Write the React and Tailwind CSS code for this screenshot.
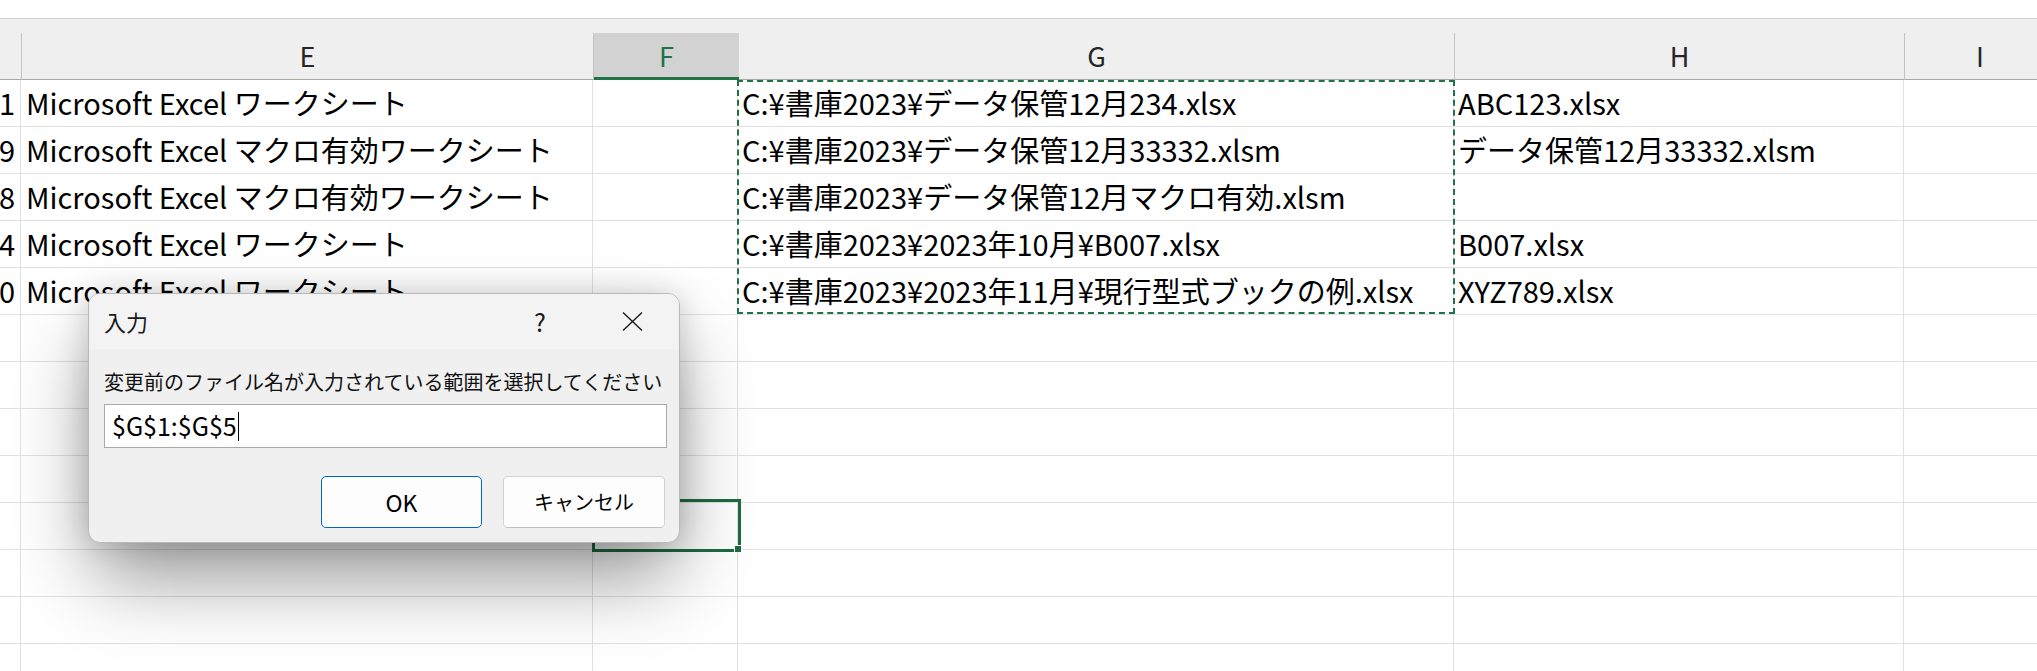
import React from "react";

const rows = [
  { d: "1", e: "Microsoft Excel ワークシート", g: "C:¥書庫2023¥データ保管12月234.xlsx", h: "ABC123.xlsx" },
  { d: "9", e: "Microsoft Excel マクロ有効ワークシート", g: "C:¥書庫2023¥データ保管12月33332.xlsm", h: "データ保管12月33332.xlsm" },
  { d: "8", e: "Microsoft Excel マクロ有効ワークシート", g: "C:¥書庫2023¥データ保管12月マクロ有効.xlsm", h: "" },
  { d: "4", e: "Microsoft Excel ワークシート", g: "C:¥書庫2023¥2023年10月¥B007.xlsx", h: "B007.xlsx" },
  { d: "0", e: "Microsoft Excel ワークシート", g: "C:¥書庫2023¥2023年11月¥現行型式ブックの例.xlsx", h: "XYZ789.xlsx" },
];

// pad out the empty rows below the data
const allRows = [...rows, ...Array.from({ length: 8 }, () => ({ d: "", e: "", g: "", h: "" }))];

function Row({ r }) {
  return (
    <div className="flex h-[47px] border-b border-[#e1e1e1]">
      <div className="w-[22px] shrink-0 border-r border-[#e1e1e1] flex items-center justify-end pr-[5px] -ml-[1px]">
        {r.d}
      </div>
      <div className="w-[572px] shrink-0 border-r border-[#e1e1e1] flex items-center pl-[5px] whitespace-nowrap">{r.e}</div>
      <div className="w-[145px] shrink-0 border-r border-[#e1e1e1]" />
      <div className="w-[716px] shrink-0 border-r border-[#e1e1e1] flex items-center pl-[4px] whitespace-nowrap">{r.g}</div>
      <div className="w-[450px] shrink-0 border-r border-[#e1e1e1] flex items-center pl-[4px] whitespace-nowrap">{r.h}</div>
      <div className="w-[150px] shrink-0" />
    </div>
  );
}

function InputDialog() {
  return (
    <div className="absolute left-[88px] top-[293px] z-10 w-[592px] h-[250px] rounded-[12px] border border-[#b9b9b9] bg-[#f0f0f0] shadow-[0_40px_80px_-6px_rgba(0,0,0,0.42),0_0_30px_rgba(0,0,0,0.16)] overflow-hidden flex flex-col">
      <div className="h-[55px] bg-[#f3f3f3] flex items-center pl-[15px] text-[22px] text-[#1a1a1a]">
        <span>入力</span>
        <div className="ml-auto flex items-center">
          <div className="w-[92px] text-center text-[25px]">?</div>
          <div className="w-[92px] flex justify-center mr-[1px]">
            <svg width="21" height="19" viewBox="0 0 21 19" fill="none" stroke="#1a1a1a" strokeWidth="1.4">
              <path d="M1 0.5 L20 18.5 M20 0.5 L1 18.5" />
            </svg>
          </div>
        </div>
      </div>
      <div className="flex-1 px-[14px] pl-[15px] flex flex-col">
        <div className="mt-[19px] h-[28px] leading-[28px] text-[20px] text-[#111] whitespace-nowrap">
          変更前のファイル名が入力されている範囲を選択してください
        </div>
        <div className="mt-[8px] h-[44px] w-[563px] bg-white border border-[#a9a9a9] flex items-center pl-[7px] text-[25px] text-black">
          <span>$G$1:$G$5</span>
          <span className="ml-[1px] w-px h-[29px] bg-black" />
        </div>
        <div className="mt-[28px] flex justify-end gap-[21px]">
          <button className="w-[161px] h-[52px] rounded-[5px] border border-[#0067c0] bg-[#fdfdfd] text-[23px] text-black">
            OK
          </button>
          <button className="w-[162px] h-[52px] rounded-[5px] border border-[#d2d2d2] border-b-[#bdbdbd] bg-[#fdfdfd] text-[20px] text-black">
            キャンセル
          </button>
        </div>
      </div>
    </div>
  );
}

export default function App() {
  return (
    <div
      className="relative w-[2037px] h-[671px] overflow-hidden bg-white text-black text-[29px]"
      style={{ fontFamily: '"Noto Sans CJK JP", "Noto Sans", sans-serif' }}
    >
      <div className="h-[19px] border-b border-[#d4d4d4]" />

      {/* column headers */}
      <div className="bg-[#efefef] pt-[14px]">
        <div className="flex h-[47px] text-[27px] text-[#262626]">
          <div className="w-[22px] shrink-0 border-r border-b border-[#a8a8a8] border-r-[#c2c2c2]" />
          <div className="w-[572px] shrink-0 border-r border-b border-[#a8a8a8] border-r-[#c2c2c2] flex items-center justify-center">E</div>
          <div className="w-[145px] shrink-0 bg-[#d2d2d2] border-b-[3px] border-[#217346] flex items-center justify-center text-[#217346] pt-[2px]">F</div>
          <div className="w-[716px] shrink-0 border-r border-b border-[#a8a8a8] border-r-[#c2c2c2] flex items-center justify-center">G</div>
          <div className="w-[450px] shrink-0 border-r border-b border-[#a8a8a8] border-r-[#c2c2c2] flex items-center justify-center">H</div>
          <div className="w-[150px] shrink-0 border-b border-[#a8a8a8] flex items-center justify-center">I</div>
        </div>
      </div>

      {allRows.map((r, i) => (
        <Row key={i} r={r} />
      ))}

      {/* copy range marquee */}
      <div className="absolute left-[737px] top-[80px] w-[718px] h-[234px] border-2 border-dashed border-[#217346]" />

      {/* active cell */}
      <div className="absolute left-[592px] top-[499px] w-[149px] h-[53px] border-[3px] border-[#1e6c41]" />
      <div className="absolute left-[734px] top-[545px] w-[8px] h-[8px] bg-[#1e6c41] border border-white" />

      <InputDialog />
    </div>
  );
}
